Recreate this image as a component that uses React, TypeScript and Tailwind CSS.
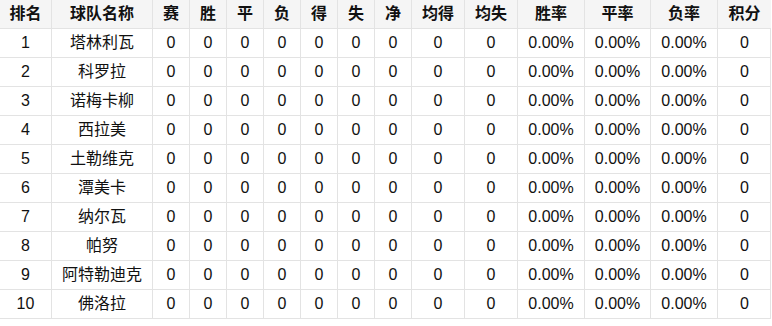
import React from "react";

const headers = ["排名", "球队名称", "赛", "胜", "平", "负", "得", "失", "净", "均得", "均失", "胜率", "平率", "负率", "积分"];
const teams = ["塔林利瓦", "科罗拉", "诺梅卡柳", "西拉美", "土勒维克", "潭美卡", "纳尔瓦", "帕努", "阿特勒迪克", "佛洛拉"];

export default function App() {
  const font = { fontFamily: '"Liberation Sans", "Noto Sans CJK SC", sans-serif' };
  return (
    <div className="w-[772px] h-[326px] bg-white" style={font}>
      <div className="grid grid-cols-[52px_101px_37px_37px_37px_37px_37px_37px_37px_53px_53px_67px_66px_67px_53px] w-[771px] border-r border-[#e3e3e3]">
        {headers.map((h, i) => (
          <div
            key={h}
            className={`h-[29px] flex items-center justify-center bg-[#f5f5f5] border-b border-[#e3e3e3] text-[16px] font-bold text-[#111] ${i < headers.length - 1 ? "border-r" : ""}`}
          >
            {h}
          </div>
        ))}
        {teams.map((t, r) => {
          const cells = [String(r + 1), t, "0", "0", "0", "0", "0", "0", "0", "0", "0", "0.00%", "0.00%", "0.00%", "0"];
          return cells.map((c, i) => (
            <div
              key={`${r}-${i}`}
              className={`h-[29px] flex items-center justify-center border-b border-[#e3e3e3] text-[16px] text-[#111] ${i < cells.length - 1 ? "border-r" : ""}`}
            >
              {c}
            </div>
          ));
        })}
      </div>
    </div>
  );
}
